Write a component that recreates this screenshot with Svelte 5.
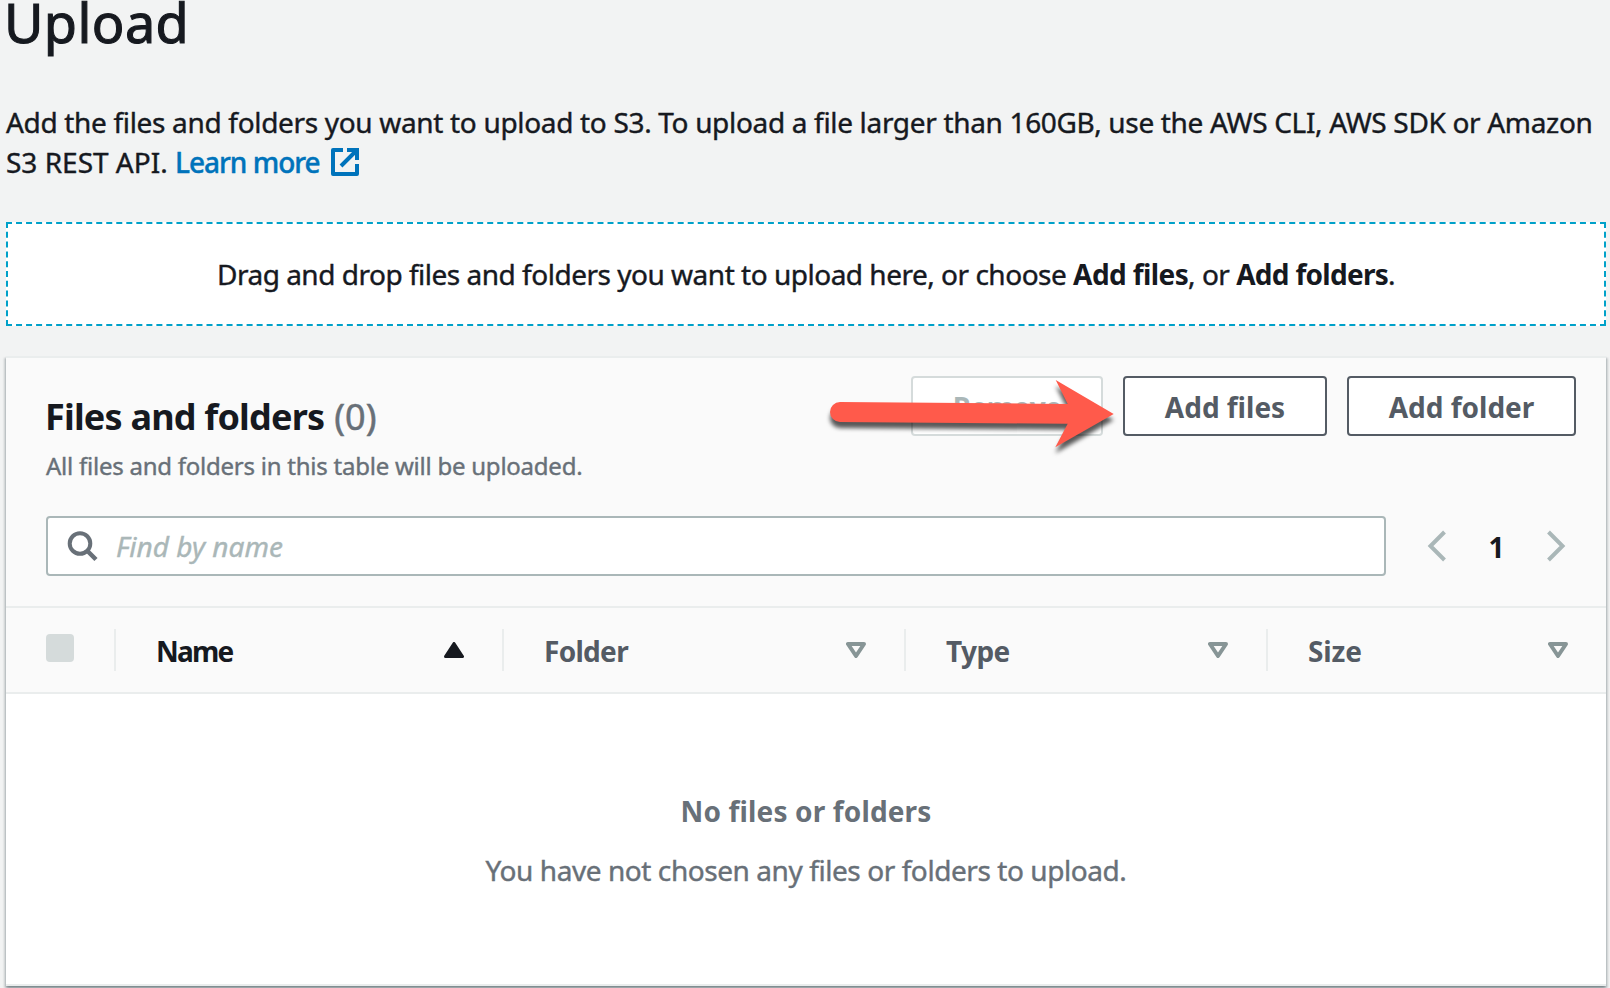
<script>
  const columns = [
    { label: 'Name', sorted: true, width: 388, spacing: -1.75 },
    { label: 'Folder', sorted: false, width: 402, spacing: -0.7 },
    { label: 'Type', sorted: false, width: 362, spacing: -0.6 },
    { label: 'Size', sorted: false, width: 340, spacing: -0.1 }
  ];
</script>

<main>
  <h1>Upload</h1>

  <p class="intro">
    <span class="line">Add the files and folders you want to upload to S3. To upload a file larger than 160GB, use the AWS CLI, AWS SDK or Amazon</span>
    <span class="line second">S3 REST API. <a href="#learn">Learn more</a><svg class="external" width="28" height="28" viewBox="0 0 28 28" fill="none" stroke="#0073bb" stroke-width="4"><path d="M12 2H2v24h24V16" stroke-linejoin="round" /><path d="M16 2h10v10M25 3 10 18" /></svg></span>
  </p>

  <div class="dropzone">
    <span class="drag">Drag and drop files and folders you want to upload here, or choose <b class="b1">Add files</b>, or <b class="b2">Add folders</b>.</span>
  </div>

  <section class="panel">
    <header>
      <div class="top">
        <div class="titles">
          <h2>Files and folders <span>(0)</span></h2>
          <p>All files and folders in this table will be uploaded.</p>
        </div>
        <div class="actions">
          <button class="remove" disabled>Remove</button>
          <button class="files">Add files</button>
          <button class="folder">Add folder</button>
          <svg class="arrow" width="310" height="90" viewBox="820 370 310 90">
            <path d="M840 402 1067.7 404 1055.7 380 1113.7 414 1055.3 447.3 1067.7 423.7 840 422A10 10 0 0 1 840 402Z" fill="#ff5a4b" />
          </svg>
        </div>
      </div>
      <div class="tools">
        <div class="search">
          <svg width="32" height="32" viewBox="0 0 32 32" fill="none" stroke="#687078" stroke-width="4"><circle cx="13" cy="13.5" r="10.3" /><path d="m20 20.5 9 9" stroke-width="4.5" /></svg>
          <span>Find by name</span>
        </div>
        <nav>
          <svg width="20" height="32" viewBox="0 0 20 32"><path d="M17.5 2 3.5 16l14 14" /></svg>
          <b>1</b>
          <svg width="20" height="32" viewBox="0 0 20 32"><path d="m2.5 2 14 14-14 14" /></svg>
        </nav>
      </div>
    </header>

    <div class="thead">
      <div class="check"><i></i></div>
      {#each columns as col}
        <div class="th" class:sorted={col.sorted} style="width: {col.width}px">
          <span style="letter-spacing: {col.spacing}px">{col.label}</span>
          {#if col.sorted}
            <svg width="20" height="16" viewBox="0 0 20 16"><path d="M10 1.5 18.5 14.5h-17Z" fill="#16191f" stroke="#16191f" stroke-width="3" stroke-linejoin="round" /></svg>
          {:else}
            <svg width="20" height="16" viewBox="0 0 20 16"><path d="M2 2h16l-8 12Z" fill="none" stroke="#879596" stroke-width="4" stroke-linejoin="round" /></svg>
          {/if}
        </div>
      {/each}
    </div>

    <div class="empty">
      <b>No files or folders</b>
      <p>You have not chosen any files or folders to upload.</p>
    </div>
  </section>
</main>

<style>
  :global(body) {
    margin: 0;
    background: #f2f3f3;
  }
  main {
    box-sizing: border-box;
    width: 1610px;
    height: 988px;
    overflow: hidden;
    padding: 0 4px 0 6px;
    font: 28px/40px 'Noto Sans', 'Open Sans', sans-serif;
    color: #16191f;
    background: #f2f3f3;
    white-space: nowrap;
  }
  h1, h2, p { margin: 0; }
  h1 {
    margin-left: -2px;
    font-size: 54px;
    line-height: 44px;
    font-weight: 400;
    letter-spacing: 0.4px;
    -webkit-text-stroke: 1.1px;
  }
  .intro, .drag, .titles p, .search span, .empty p { -webkit-text-stroke: 0.4px; }
  .intro { padding-top: 58px; }
  .line { display: block; letter-spacing: -0.325px; }
  .second { display: flex; align-items: center; letter-spacing: 0; white-space: pre; }
  a { color: #0073bb; text-decoration: none; font-weight: 500; letter-spacing: -1px; }
  .external { margin: -1px 0 0 11px; }
  .dropzone {
    box-sizing: border-box;
    height: 104px;
    margin-top: 40px;
    border: 2px dashed #00a1c9;
    background: #fff;
    display: flex;
    align-items: center;
    justify-content: center;
  }
  .drag { letter-spacing: -0.49px; }
  .drag b { -webkit-text-stroke: 0; }
  .b1 { letter-spacing: -0.6px; }
  .b2 { letter-spacing: -0.72px; }
  .panel {
    box-sizing: border-box;
    height: 630px;
    margin-top: 30px;
    border-top: 2px solid #eaeded;
    border-bottom: 2px solid #eaeded;
    background: #fff;
    box-shadow: 0 2px 2px rgba(0, 28, 36, 0.3), 2px 2px 2px rgba(0, 28, 36, 0.15), -2px 2px 2px rgba(0, 28, 36, 0.15);
  }
  header {
    box-sizing: border-box;
    height: 250px;
    padding: 18px 30px 30px 40px;
    border-bottom: 2px solid #eaeded;
    background: #fafafa;
    display: flex;
    flex-direction: column;
    justify-content: space-between;
  }
  .top, .tools { display: flex; justify-content: space-between; }
  .titles { padding-top: 19px; }
  h2 { margin-left: -1px; font-size: 36px; line-height: 44px; letter-spacing: -0.8px; }
  h2 span { margin-left: 1.5px; font-weight: 400; color: #687078; letter-spacing: 0; -webkit-text-stroke: 0.5px; }
  .titles p { margin-top: 11px; font-size: 24px; line-height: 32px; letter-spacing: -0.24px; color: #687078; }
  .actions { position: relative; display: flex; gap: 20px; height: 60px; }
  button {
    box-sizing: border-box;
    height: 60px;
    padding: 1px 0 0;
    border: 2px solid #545b64;
    border-radius: 4px;
    background: #fff;
    font: 700 28px/40px 'Noto Sans', 'Open Sans', sans-serif;
    color: #545b64;
  }
  .remove { width: 192px; border-color: #d5dbdb; color: #aab7b8; letter-spacing: -0.6px; }
  .files { width: 204px; }
  .folder { width: 229px; }
  .arrow {
    position: absolute;
    left: -91px;
    top: -6px;
    filter: drop-shadow(0 6px 2px rgba(0, 0, 0, 0.65));
  }
  .search {
    box-sizing: border-box;
    width: 1340px;
    height: 60px;
    padding-left: 19px;
    border: 2px solid #aab7b8;
    border-radius: 4px;
    background: #fff;
    display: flex;
    align-items: center;
    gap: 17px;
  }
  .search span { font-style: italic; color: #aab7b8; letter-spacing: 0; }
  nav { width: 139px; display: flex; align-items: center; justify-content: space-between; margin-right: 10px; }
  nav path { fill: none; stroke: #aab7b8; stroke-width: 4; }
  nav b { font-size: 28px; padding-top: 1px; }
  .thead {
    box-sizing: border-box;
    height: 86px;
    border-bottom: 2px solid #eaeded;
    background: #fafafa;
    display: flex;
    align-items: center;
  }
  .check { width: 108px; padding-left: 40px; box-sizing: border-box; }
  .check i { display: block; width: 28px; height: 28px; border-radius: 4px; background: #d5dbdb; margin-top: -4px; }
  .th {
    box-sizing: border-box;
    height: 42px;
    padding: 0 38px 0 40px;
    border-left: 2px solid #eaeded;
    display: flex;
    align-items: center;
    justify-content: space-between;
    font-weight: 700;
    color: #545b64;
  }
  .th span { padding-top: 2px; }
  .th.sorted { color: #16191f; }
  .empty { padding-top: 97px; text-align: center; color: #687078; }
  .empty b { display: block; letter-spacing: 0.15px; }
  .empty p { margin-top: 19px; letter-spacing: -0.43px; }
</style>
